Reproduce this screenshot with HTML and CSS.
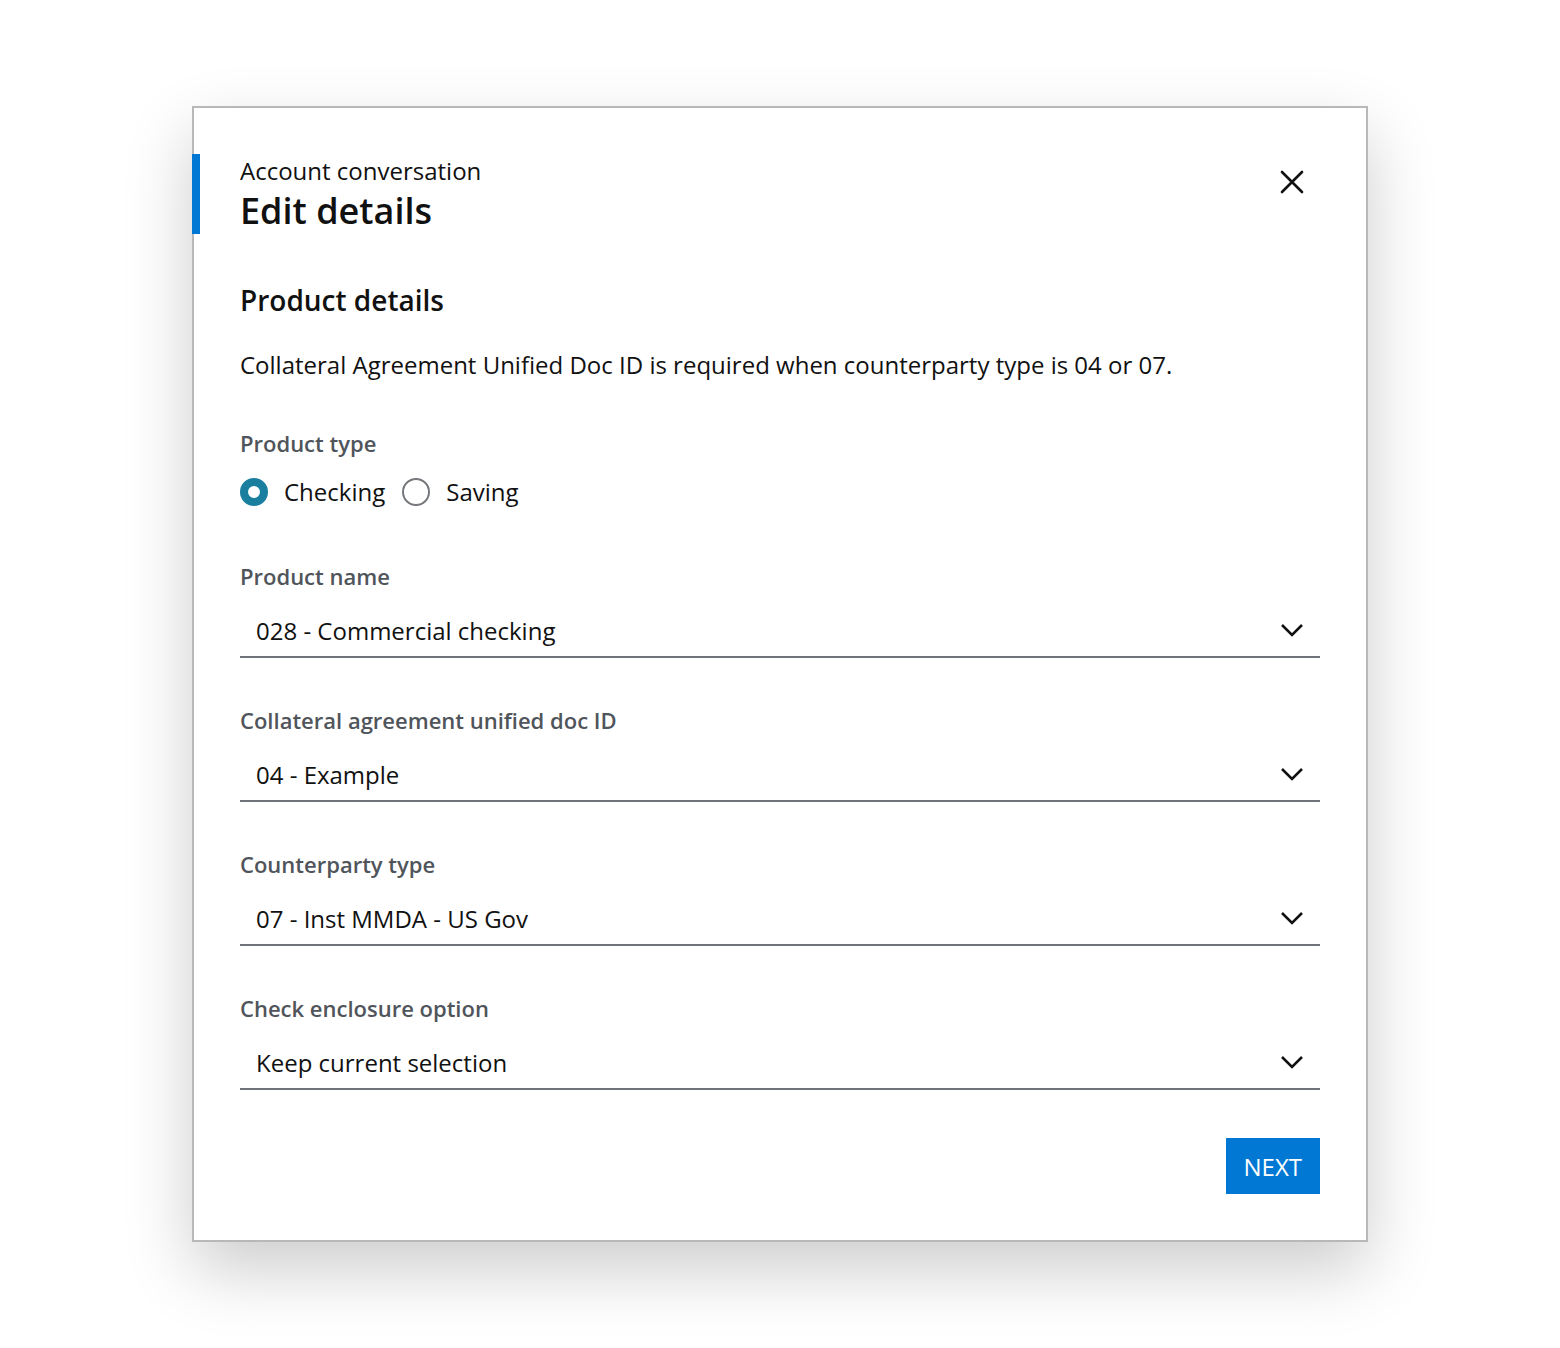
FILE: index.html
```html
<!DOCTYPE html>
<html lang="en">
  <head>
    <meta charset="utf-8" />
    <title>Edit details</title>
    <link rel="stylesheet" href="styles.css">
  </head>
  <body>
    <div class="dialog">
      <header class="dialog-head">
        <div class="titles">
          <div class="eyebrow">Account conversation</div>
          <h1>Edit details</h1>
        </div>
        <button class="close" aria-label="Close">
          <svg width="24" height="24" viewBox="0 0 24 24"><path d="M2 2 L22 22 M22 2 L2 22" stroke="#111" stroke-width="2.6" fill="none" stroke-linecap="round"/></svg>
        </button>
      </header>

      <h2>Product details</h2>
      <p class="note">Collateral Agreement Unified Doc ID is required when counterparty type is 04 or 07.</p>

      <div class="label">Product type</div>
      <div class="radios">
        <label class="radio"><span class="dot checked"></span>Checking</label>
        <label class="radio"><span class="dot"></span>Saving</label>
      </div>

      <div class="field">
        <div class="label">Product name</div>
        <div class="select">
          <span>028 - Commercial checking</span>
          <svg class="chev" width="24" height="14" viewBox="0 0 24 14"><path d="M2 2 L12 12 L22 2" stroke="#111" stroke-width="2.6" fill="none"/></svg>
        </div>
      </div>

      <div class="field">
        <div class="label">Collateral agreement unified doc ID</div>
        <div class="select">
          <span>04 - Example</span>
          <svg class="chev" width="24" height="14" viewBox="0 0 24 14"><path d="M2 2 L12 12 L22 2" stroke="#111" stroke-width="2.6" fill="none"/></svg>
        </div>
      </div>

      <div class="field">
        <div class="label">Counterparty type</div>
        <div class="select">
          <span>07 - Inst MMDA - US Gov</span>
          <svg class="chev" width="24" height="14" viewBox="0 0 24 14"><path d="M2 2 L12 12 L22 2" stroke="#111" stroke-width="2.6" fill="none"/></svg>
        </div>
      </div>

      <div class="field">
        <div class="label">Check enclosure option</div>
        <div class="select">
          <span>Keep current selection</span>
          <svg class="chev" width="24" height="14" viewBox="0 0 24 14"><path d="M2 2 L12 12 L22 2" stroke="#111" stroke-width="2.6" fill="none"/></svg>
        </div>
      </div>

      <div class="actions">
        <button class="next">NEXT</button>
      </div>
    </div>
  </body>
</html>
```

FILE: styles.css
```css
html,
body {
  margin: 0;
  padding: 0;
  background: #fff;
  font-family: "Open Sans", "Noto Sans", sans-serif;
  color: #111;
}
body {
  min-height: 1348px;
  box-sizing: border-box;
  padding: 106px 0 0;
}
.dialog {
  width: 1080px;
  margin: 0 auto;
  padding: 46px 46px 46px;
  border: 2px solid #b8b8b8;
  background: #fff;
  box-shadow: 0 28px 64px rgba(0, 0, 0, 0.2);
}
.dialog-head {
  position: relative;
  display: flex;
  align-items: flex-start;
  justify-content: space-between;
  height: 80px;
}
.dialog-head::before {
  content: "";
  position: absolute;
  left: -48px;
  top: 0;
  width: 8px;
  height: 80px;
  background: #0078d4;
}
.titles {
  display: flex;
  flex-direction: column;
  padding-top: 1px;
}
.eyebrow {
  font-size: 24px;
  line-height: 32px;
}
h1 {
  margin: 0;
  font-size: 36px;
  font-weight: 600;
  line-height: 48px;
}
.close {
  border: 0;
  background: none;
  padding: 0;
  margin: 16px 16px 0 0;
  width: 24px;
  height: 24px;
  cursor: pointer;
}
.close svg {
  display: block;
}
h2 {
  margin: 48px 0 0;
  font-size: 28px;
  font-weight: 600;
  line-height: 36px;
}
.note {
  margin: 31px 0 0;
  font-size: 24px;
  line-height: 32px;
}
.label {
  margin-top: 48px;
  font-size: 22px;
  font-weight: 600;
  line-height: 28px;
  color: #50555b;
}
.radios {
  display: flex;
  align-items: center;
  gap: 17px;
  margin-top: 19px;
  height: 32px;
}
.radio {
  display: flex;
  align-items: center;
  gap: 16px;
  font-size: 24px;
  line-height: 32px;
}
.dot {
  box-sizing: border-box;
  width: 28px;
  height: 28px;
  border-radius: 50%;
  border: 2px solid #75787c;
  background: #fff;
}
.dot.checked {
  border: 8px solid #1a7f9f;
}
.field {
  margin-top: 54px;
}
.field + .field {
  margin-top: 48px;
}
.field .label {
  margin-top: 0;
}
.select {
  display: flex;
  align-items: center;
  justify-content: space-between;
  margin-top: 18px;
  height: 48px;
  padding: 0 16px;
  border-bottom: 2px solid #707478;
  font-size: 24px;
}
.select span {
  margin-top: -3px;
}
.chev {
  display: block;
  margin-top: -4px;
}
.actions {
  display: flex;
  justify-content: flex-end;
  margin-top: 48px;
}
.next {
  height: 56px;
  padding: 0 18px;
  border: 0;
  background: #0078d4;
  color: #fff;
  font-family: inherit;
  font-size: 24px;
  cursor: pointer;
}
```
